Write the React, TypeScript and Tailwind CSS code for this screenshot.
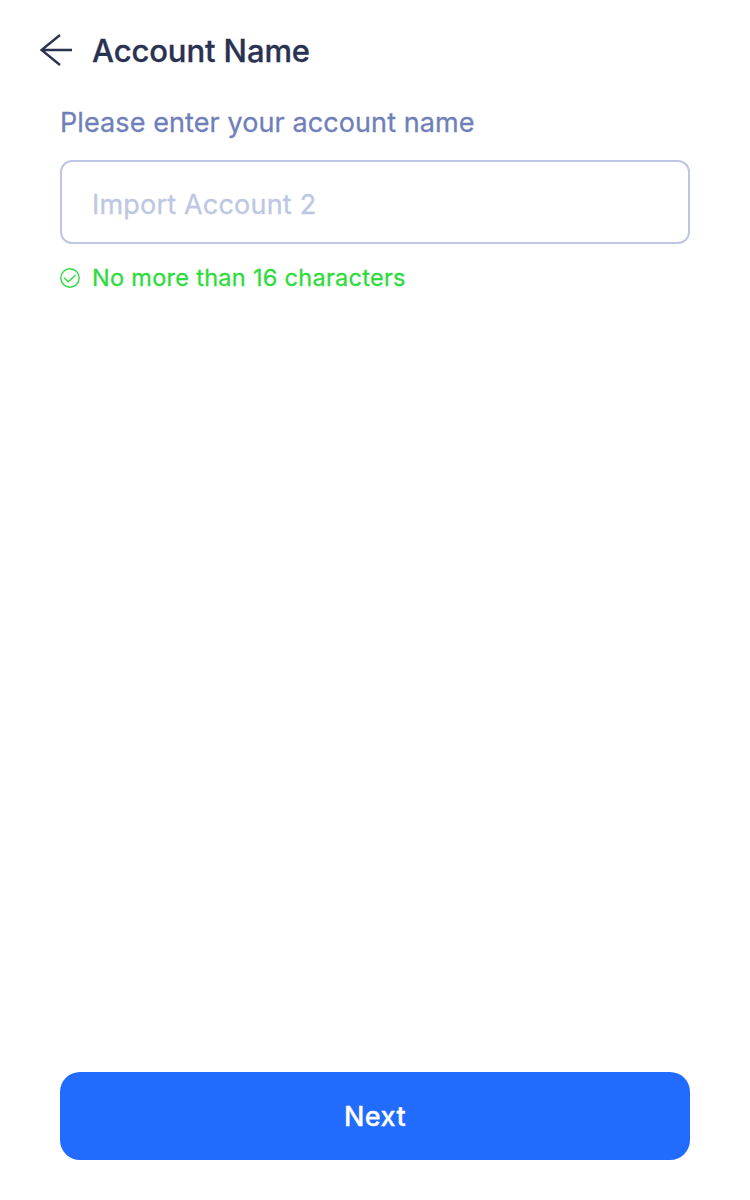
export default function App() {
  return (
    <main className="flex h-[1200px] w-[750px] flex-col bg-white font-['Inter',sans-serif] [-webkit-text-stroke:0.3px]">
      <header className="flex h-[100px] items-center pl-10 text-[#2a3252]">
        <button aria-label="Back" className="mr-5">
          <svg width="32" height="32" viewBox="0 0 32 32" fill="none" stroke="currentColor" strokeWidth="2.4" className="block">
            <path d="M32 16H2M20 1 1.5 16 20 31" />
          </svg>
        </button>
        <h1 className="pt-0.5 text-[31px] leading-[40px] font-medium tracking-[-0.1px]">Account Name</h1>
      </header>
      <section className="flex flex-col px-[60px]">
        <label htmlFor="account" className="mt-[5px] text-[27px] leading-9 tracking-[0.09px] text-[#6f80b8]">Please enter your account name</label>
        <input id="account" placeholder="Import Account 2" className="mt-[19px] h-21 rounded-xl border-2 border-[#bdc7e3] pt-1 pr-4 pl-[30px] text-[27px] tracking-[0.2px] text-[#2a3252] outline-none placeholder:text-[#bdc7e3]" />
        <div className="mt-[18px] flex items-center gap-3 text-[#2edb3c]">
          <svg width="20" height="20" viewBox="0 0 20 20" fill="none" stroke="currentColor" strokeWidth="1.4">
            <circle cx="10" cy="10" r="9.2" />
            <path d="m4.2 9.8 4 4 7.3-6.9" />
          </svg>
          <p className="text-[23.5px] leading-8 tracking-[0.29px]">No more than 16 characters</p>
        </div>
      </section>
      <footer className="mt-auto px-[60px] pb-10">
        <button className="block h-22 w-full rounded-[20px] bg-[#216bff] pt-0.5 text-[27px] font-medium tracking-[0.4px] text-white">Next</button>
      </footer>
    </main>
  );
}
